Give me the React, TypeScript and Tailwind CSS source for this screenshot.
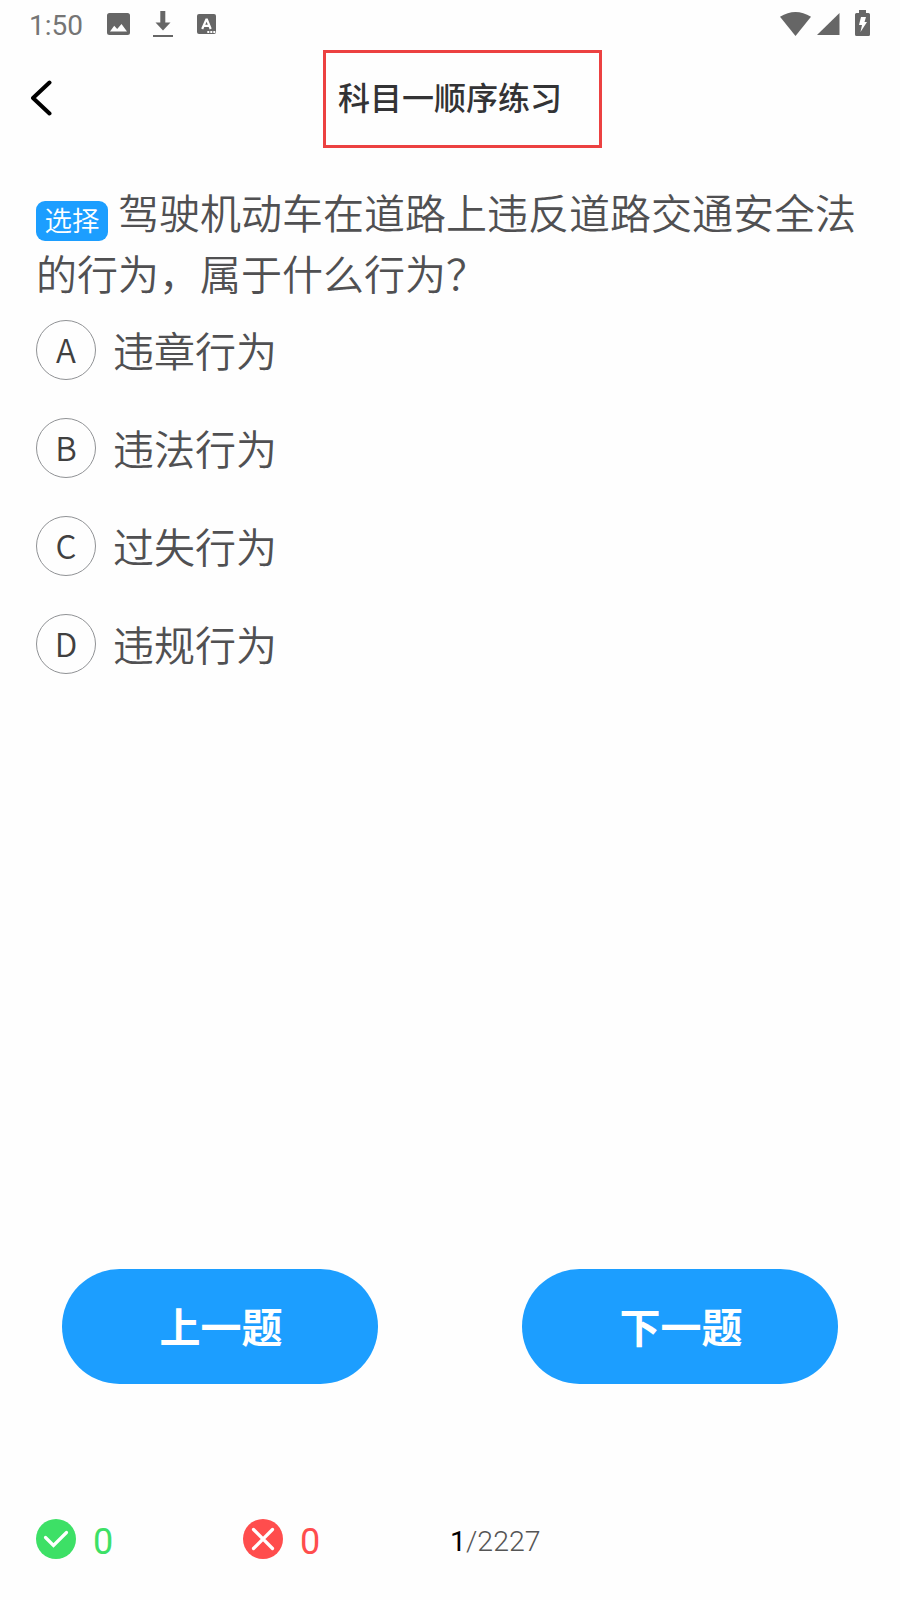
const options = [
  { key: "A", label: "违章行为" },
  { key: "B", label: "违法行为" },
  { key: "C", label: "过失行为" },
  { key: "D", label: "违规行为" },
];

function StatusBar() {
  return (
    <div className="flex h-12 items-center justify-between pl-[29px] pr-[30px] text-[#666666]">
      <div className="flex items-center">
        <span className="w-[78px] pt-[3px] font-['Roboto',sans-serif] text-[28px] leading-none text-[#757575]">1:50</span>
        <svg width="23" height="22" viewBox="0 0 23 22">
          <path
            fillRule="evenodd"
            fill="currentColor"
            d="M2.500 0h18A2.500 2.500 0 0 1 23 2.500v17a2.500 2.500 0 0 1-2.500 2.500h-18A2.500 2.500 0 0 1 0 19.500v-17A2.500 2.500 0 0 1 2.500 0ZM3 18.500h17l-5.500-7.500-4.300 5-3-3.200Z"
          />
        </svg>
        <svg className="ml-[23px]" width="20" height="26" viewBox="0 0 20 26">
          <path fill="currentColor" d="M7.300 0h5v11.500H17.500L10 19.500 2.500 11.500H7.300Z M0 24h20v2H0Z" />
        </svg>
        <svg className="ml-[24px]" width="19" height="20" viewBox="0 0 19 20">
          <rect width="19" height="20" rx="2" fill="currentColor" />
          <path d="M5.200 15 9.300 5.500h.6L13.700 15M6.700 11.800h5.500" fill="none" stroke="white" strokeWidth="2.200" />
          <path d="M10.300 18h2M13.300 18h2M16.300 18h2" stroke="white" strokeWidth="2" />
        </svg>
      </div>
      <div className="flex items-center">
        <svg width="32" height="24" viewBox="0 0 32 24">
          <path fill="currentColor" d="M0 4.800Q15.500-4.800 31 4.800L15.500 24Z" />
        </svg>
        <svg className="ml-[5px]" width="23" height="22" viewBox="0 0 23 22">
          <path fill="currentColor" d="M0 22 22.500 0V22Z" />
        </svg>
        <svg className="-mt-[2px] ml-[15px]" width="15" height="26" viewBox="0 0 15 26">
          <path fill="currentColor" d="M4 0h7v3h2.500Q15 3 15 4.500v20Q15 26 13.500 26h-12Q0 26 0 24.500v-20Q0 3 1.500 3H4Z" />
          <path fill="white" d="M6 7h5l-1.500 5h2.500L5.500 22l1.500-7H4Z" />
        </svg>
      </div>
    </div>
  );
}

function NavButton({ label }: { label: string }) {
  return (
    <button className="flex h-[115px] w-[316px] items-center justify-center rounded-full bg-[#1c9eff] pb-[3px] pl-[2px] text-[41px] font-bold leading-none text-white">
      {label}
    </button>
  );
}

export default function App() {
  return (
    <div className="flex h-[1600px] w-[900px] flex-col bg-[#fefefe] font-['Noto_Sans_CJK_SC',sans-serif] text-[#505052]">
      <StatusBar />
      <header className="flex h-[104px] pl-[31px] pt-[2px]">
        <svg className="mt-[29px]" width="22" height="38" viewBox="0 0 22 38">
          <path d="M18.500 3 2 18.500 18.500 34" transform="translate(0 .5)" fill="none" stroke="black" strokeWidth="4" strokeLinecap="round" strokeLinejoin="round" />
        </svg>
        <h1 className="ml-[270px] flex h-[98px] w-[279px] items-center border-[3px] border-[#ec4141] pb-[6px] pl-[12px] text-[32px] font-medium leading-none text-[#333335]">
          科目一顺序练习
        </h1>
      </header>
      <main className="flex grow flex-col pl-9">
        <p className="mt-[29px] w-[840px] text-[41px] font-[350] leading-[61px]">
          <span className="mr-[10px] inline-flex h-10 w-[72px] items-center justify-center rounded-[9px] bg-[#1c9eff] pb-[2px] align-[-2px] text-[27.500px] leading-none text-white">
            选择
          </span>
          驾驶机动车在道路上违反道路交通安全法的行为，属于什么行为？
        </p>
        <ul className="mt-[17px] flex flex-col gap-[38px]">
          {options.map((o) => (
            <li key={o.key} className="flex h-[60px] items-center gap-[17px]">
              <span className="flex size-[60px] items-center justify-center rounded-full border border-[#909295] pb-[2px] text-[33px] font-[350] leading-none text-[#404040]">
                {o.key}
              </span>
              <span className="pb-[3px] text-[41px] font-[350] leading-[60px]">{o.label}</span>
            </li>
          ))}
        </ul>
      </main>
      <div className="flex gap-36 pl-[62px]">
        <NavButton label="上一题" />
        <NavButton label="下一题" />
      </div>
      <footer className="mt-[135px] flex h-[81px] items-start pl-9 font-['Roboto',sans-serif]">
        <div className="flex h-10 w-[207px] items-center gap-[17px] text-[#3de066]">
          <svg width="40" height="40" viewBox="0 0 40 40">
            <circle cx="20" cy="20" r="20" fill="currentColor" />
            <path d="m9.500 18.500 8 8L30.500 13.500" fill="none" stroke="white" strokeWidth="3.200" strokeLinecap="round" />
          </svg>
          <span className="pt-[6px] text-[36px] font-normal leading-none">0</span>
        </div>
        <div className="flex h-10 w-[207px] items-center gap-[17px] text-[#ff4d4d]">
          <svg width="40" height="40" viewBox="0 0 40 40">
            <circle cx="20" cy="20" r="20" fill="currentColor" />
            <path d="M10.500 10.500 29.500 29.500M29.500 10.500 10.500 29.500" fill="none" stroke="white" strokeWidth="3.200" strokeLinecap="round" />
          </svg>
          <span className="pt-[6px] text-[36px] font-normal leading-none">0</span>
        </div>
        <div className="flex h-10 items-center pt-[6px] text-[28.500px] font-light leading-none text-[#555555]">
          <span className="font-normal text-black">1</span>/2227
        </div>
      </footer>
    </div>
  );
}
